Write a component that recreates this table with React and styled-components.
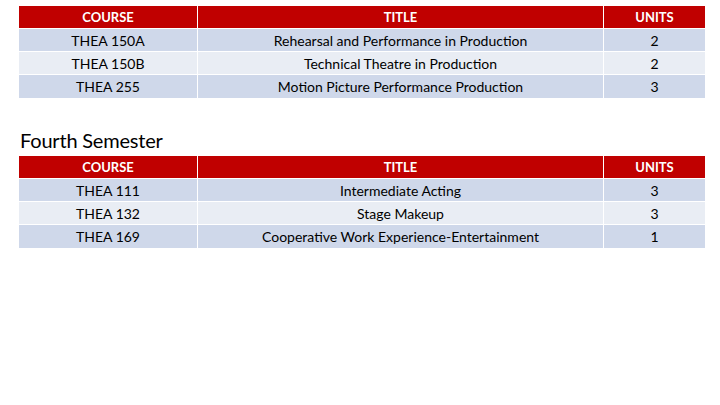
import React from "react";
import styled, { createGlobalStyle } from "styled-components";

const GlobalStyle = createGlobalStyle`
  html, body {
    margin: 0;
    padding: 0;
    background: #ffffff;
  }
  body {
    font-family: Lato, "Open Sans", "Liberation Sans", sans-serif;
    color: #000000;
  }
`;

const Page = styled.div`
  width: 720px;
  height: 405px;
  box-sizing: border-box;
  padding: 6px 15px 0 19px;
  overflow: hidden;
`;

const Heading = styled.h2`
  margin: 30px 0 4px 1px;
  font-size: 20px;
  font-weight: 400;
  line-height: 24px;
  letter-spacing: -0.2px;
`;

const Table = styled.table`
  width: 686px;
  border-collapse: separate;
  border-spacing: 0;
  table-layout: fixed;
  font-size: 14px;
`;

const Col = styled.col`
  width: ${(p) => p.$w}px;
`;

const HeadCell = styled.th`
  box-sizing: border-box;
  background: #c00000;
  color: #ffffff;
  font-size: 13px;
  font-weight: 700;
  height: 23px;
  padding: 0;
  text-align: center;
  border-left: 1px solid #ffffff;
  border-bottom: 1px solid #ffffff;
  &:first-child {
    border-left: none;
  }
`;

const Row = styled.tr`
  background: ${(p) => (p.$alt ? "#e9edf4" : "#cfd8ea")};
`;

const Cell = styled.td`
  box-sizing: border-box;
  height: 23px;
  padding: 0;
  text-align: center;
  border-left: 1px solid #ffffff;
  border-bottom: ${(p) => (p.$last ? "none" : "1px solid #ffffff")};
  &:first-child {
    border-left: none;
  }
`;

const CourseTable = ({ rows }) => (
  <Table>
    <colgroup>
      <Col $w={178} />
      <Col $w={406} />
      <Col $w={102} />
    </colgroup>
    <thead>
      <tr>
        <HeadCell>COURSE</HeadCell>
        <HeadCell>TITLE</HeadCell>
        <HeadCell>UNITS</HeadCell>
      </tr>
    </thead>
    <tbody>
      {rows.map((r, i) => {
        const last = i === rows.length - 1;
        return (
          <Row key={r[0]} $alt={i % 2 === 1}>
            <Cell $last={last}>{r[0]}</Cell>
            <Cell $last={last}>{r[1]}</Cell>
            <Cell $last={last}>{r[2]}</Cell>
          </Row>
        );
      })}
    </tbody>
  </Table>
);

const third = [
  ["THEA 150A", "Rehearsal and Performance in Production", "2"],
  ["THEA 150B", "Technical Theatre in Production", "2"],
  ["THEA 255", "Motion Picture Performance Production", "3"],
];

const fourth = [
  ["THEA 111", "Intermediate Acting", "3"],
  ["THEA 132", "Stage Makeup", "3"],
  ["THEA 169", "Cooperative Work Experience-Entertainment", "1"],
];

export default function App() {
  return (
    <Page>
      <GlobalStyle />
      <CourseTable rows={third} />
      <Heading>Fourth Semester</Heading>
      <CourseTable rows={fourth} />
    </Page>
  );
}
